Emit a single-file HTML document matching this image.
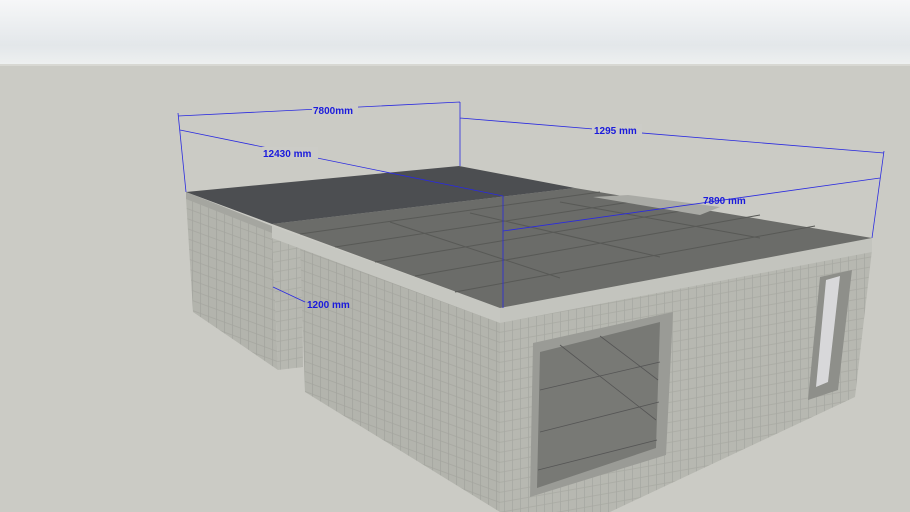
<!DOCTYPE html>
<html><head><meta charset="utf-8"><style>
html,body{margin:0;padding:0;width:910px;height:512px;overflow:hidden}
svg{display:block}
text{font-family:"Liberation Sans",sans-serif;font-weight:bold;font-size:10px;fill:#1a1adc}
</style></head><body>
<svg width="910" height="512" viewBox="0 0 910 512">
<defs>
<linearGradient id="sky" x1="0" y1="0" x2="0" y2="1">
<stop offset="0" stop-color="#f6f7f8"/><stop offset="0.7" stop-color="#e3e7ea"/><stop offset="1" stop-color="#eef0f0"/>
</linearGradient>
<pattern id="blk" width="8" height="10" patternUnits="userSpaceOnUse" patternTransform="skewY(-10)">
<rect width="8" height="10" fill="#b7b8b1"/><path d="M0 0.5H8M0.5 0V10" stroke="#a8a9a3" stroke-width="0.8"/>
</pattern>
<pattern id="blk2" width="8" height="10" patternUnits="userSpaceOnUse" patternTransform="skewY(20)">
<rect width="8" height="10" fill="#b3b4ad"/><path d="M0 0.5H8M0.5 0V10" stroke="#a4a59f" stroke-width="0.8"/>
</pattern>
</defs>
<rect width="910" height="65" fill="url(#sky)"/>
<rect y="64" width="910" height="448" fill="#cbcbc5"/>
<rect y="64" width="910" height="2" fill="#d8d8d3"/>

<polygon points="186,198 272,231 278,370 193,312" fill="url(#blk2)"/>
<polygon points="272,231 302,243 303,367 278,370" fill="url(#blk)"/>
<polygon points="300,244 500,322 500,512 305,392" fill="url(#blk2)"/>
<polygon points="500,322 872,250 855,397 610,512 500,512" fill="url(#blk)"/>
<!-- door opening -->
<polygon points="533,343 673,312 666,455 530,497" fill="#9a9b96"/>
<polygon points="540,352 660,322 656,448 537,488" fill="#787975"/>
<path d="M540,390 L660,362 M540,432 L659,402 M538,470 L657,440 M600,336 L658,380 M560,345 L656,420" stroke="#555" stroke-width="0.8"/>
<!-- window -->
<polygon points="820,277 852,270 838,390 808,400" fill="#8e8f8a"/>
<polygon points="826,280 840,276 828,382 816,387" fill="#d8d8da"/>
<!-- roof fascia -->
<polygon points="186,192 272,226 272,233 186,199" fill="#a5a6a0"/>
<polygon points="272,226 500,308 500,323 272,238" fill="#c6c7c1"/>
<polygon points="500,308 872,238 872,252 500,323" fill="#c3c4be"/>
<!-- roof -->
<polygon points="272,224 575,188 872,238 500,308" fill="#6b6c69"/>
<path d="M300,234 L600,192 M335,247 L650,199 M375,262 L705,207 M415,276 L760,215 M455,292 L815,226 M390,222 L560,278 M470,213 L660,257 M560,202 L760,238" stroke="#585956" stroke-width="1" fill="none"/>
<polygon points="186,192 459,166 575,188 272,224" fill="#4c4e51"/>
<polygon points="593,197 628,195 720,207 700,215" fill="#a9aaa5"/>
<g stroke="#2a2ae0" stroke-width="0.8" fill="none">
<path d="M178,116 L460,102 M460,102 V166 M460,118 L884,153 M178,113 L186,192 M180,130 L503,196 M503,196 V308 M503,231 L880,178 M884,151 L872,238 M273,287 L305,302"/>
</g>
<rect x="312" y="104" width="46" height="12" fill="#ccccc7"/>
<text x="313" y="114">7800mm</text>
<rect x="592" y="124" width="50" height="12" fill="#ccccc7"/>
<text x="594" y="134">1295 mm</text>
<rect x="262" y="147" width="56" height="12" fill="#ccccc7"/>
<text x="263" y="157">12430 mm</text>
<text x="703" y="204">7890 mm</text>
<text x="307" y="308">1200 mm</text>
</svg>
</body></html>
